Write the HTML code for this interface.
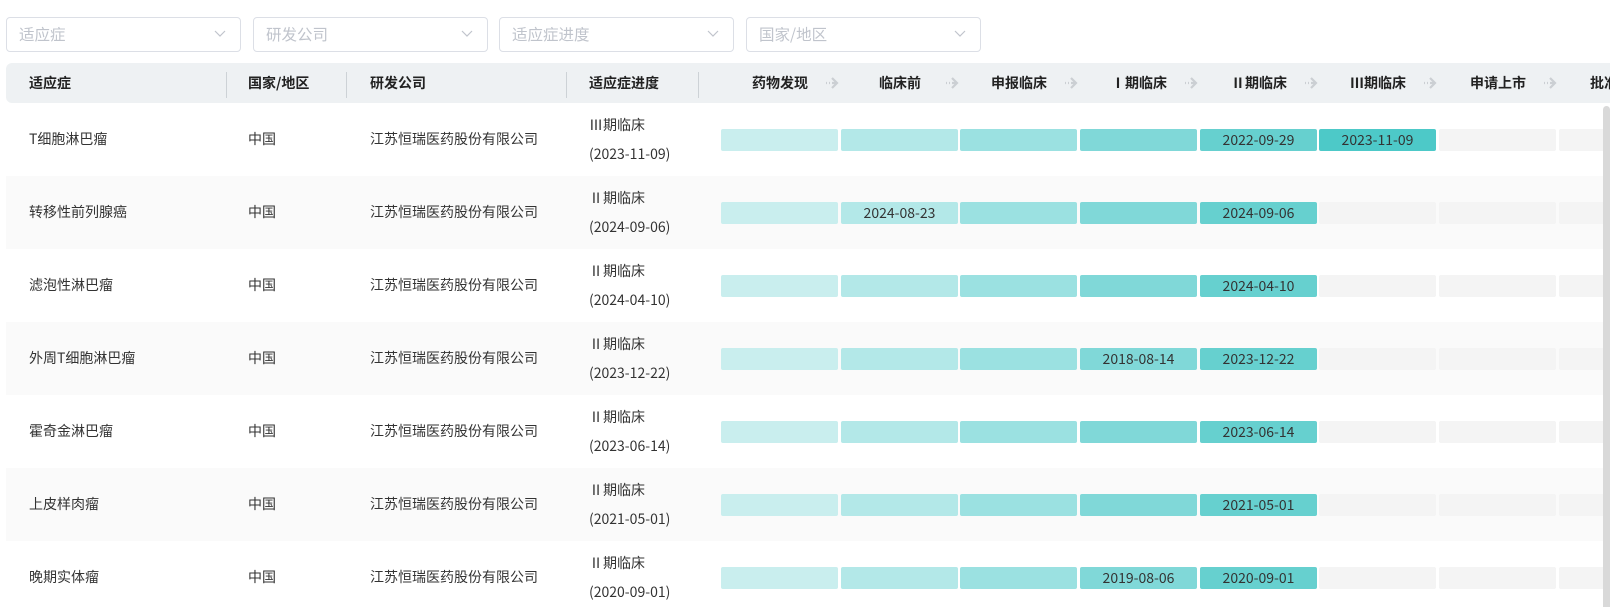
<!DOCTYPE html>
<html><head><meta charset="utf-8">
<style>
*{margin:0;padding:0;box-sizing:border-box}
html,body{width:1610px;height:607px;overflow:hidden;background:#fff}
#w{position:relative;width:1610px;height:607px;overflow:hidden;font-family:"Noto Sans CJK SC","Liberation Sans",sans-serif;font-size:14px;color:#333}
.dd{position:absolute;top:17px;height:35px;width:235px;border:1px solid #dcdfe6;border-radius:4px;color:#c0c4cc;font-size:15.5px;line-height:33px;padding-left:12px}
.dd svg{position:absolute;right:14px;top:12px}
.hdr{position:absolute;left:6px;top:63px;width:1604px;height:40px;background:#eef1f3;border-radius:6px 0 0 6px}
.t{position:absolute;line-height:40px;font-weight:bold;color:#222;white-space:nowrap}
.st{position:absolute;top:63px;line-height:40px;font-weight:bold;color:#222;width:120px;text-align:center;white-space:nowrap}
.sep{position:absolute;top:9px;width:1px;height:26px;background:#cdd2d6}
.row{position:absolute;left:6px;width:1604px;height:73px}
.c{position:absolute;top:0;line-height:73px;white-space:nowrap}
.p{position:absolute;top:8px;line-height:29px;white-space:nowrap}
.b{position:absolute;height:22px;width:117px;border-radius:2px;text-align:center;line-height:22px;color:#333;font-size:14px;background:#f4f4f4}
.a{position:absolute;top:77px}
.c1{background:#c9eeee}.c2{background:#b3e8e8}.c3{background:#9be1e1}.c4{background:#80d8d8}.c5{background:#66d0cf}.c6{background:#4dc9c8}
.x1{left:721px}.x2{left:841px}.x3{left:960px}.x4{left:1080px}.x5{left:1200px}.x6{left:1319px}.x7{left:1439px}.x8{left:1559px}
.sb{position:absolute;left:1603px;top:106px;width:7px;height:510px;background:#d9d9d9;border-radius:4px}
</style></head><body><div id="w">
<div class="dd" style="left:6px">适应症<svg width="12" height="8" viewBox="0 0 12 8"><path d="M1 1l5 5 5-5" fill="none" stroke="#c0c4cc" stroke-width="1.2"/></svg></div>
<div class="dd" style="left:253px">研发公司<svg width="12" height="8" viewBox="0 0 12 8"><path d="M1 1l5 5 5-5" fill="none" stroke="#c0c4cc" stroke-width="1.2"/></svg></div>
<div class="dd" style="left:499px">适应症进度<svg width="12" height="8" viewBox="0 0 12 8"><path d="M1 1l5 5 5-5" fill="none" stroke="#c0c4cc" stroke-width="1.2"/></svg></div>
<div class="dd" style="left:746px">国家/地区<svg width="12" height="8" viewBox="0 0 12 8"><path d="M1 1l5 5 5-5" fill="none" stroke="#c0c4cc" stroke-width="1.2"/></svg></div>

<div class="hdr">
<span class="t" style="left:23px">适应症</span>
<div class="sep" style="left:220px"></div>
<span class="t" style="left:242px">国家/地区</span>
<div class="sep" style="left:340px"></div>
<span class="t" style="left:364px">研发公司</span>
<div class="sep" style="left:560px"></div>
<span class="t" style="left:583px">适应症进度</span>
<div class="sep" style="left:692px"></div>
</div>

<span class="st" style="left:720px">药物发现</span>
<span class="st" style="left:840px">临床前</span>
<span class="st" style="left:959px">申报临床</span>
<span class="st" style="left:1079px">Ⅰ期临床</span>
<span class="st" style="left:1199px">Ⅱ期临床</span>
<span class="st" style="left:1318px">Ⅲ期临床</span>
<span class="st" style="left:1438px">申请上市</span>
<span class="st" style="left:1558px">批准上市</span>

<svg class="a" style="left:825px" width="14" height="12" viewBox="0 0 14 12"><path d="M1 6h1M4 6h1M7 6h4M7 1l5 5-5 5" fill="none" stroke="#cbcfd3" stroke-width="2.2"/></svg>
<svg class="a" style="left:945px" width="14" height="12" viewBox="0 0 14 12"><path d="M1 6h1M4 6h1M7 6h4M7 1l5 5-5 5" fill="none" stroke="#cbcfd3" stroke-width="2.2"/></svg>
<svg class="a" style="left:1064px" width="14" height="12" viewBox="0 0 14 12"><path d="M1 6h1M4 6h1M7 6h4M7 1l5 5-5 5" fill="none" stroke="#cbcfd3" stroke-width="2.2"/></svg>
<svg class="a" style="left:1184px" width="14" height="12" viewBox="0 0 14 12"><path d="M1 6h1M4 6h1M7 6h4M7 1l5 5-5 5" fill="none" stroke="#cbcfd3" stroke-width="2.2"/></svg>
<svg class="a" style="left:1304px" width="14" height="12" viewBox="0 0 14 12"><path d="M1 6h1M4 6h1M7 6h4M7 1l5 5-5 5" fill="none" stroke="#cbcfd3" stroke-width="2.2"/></svg>
<svg class="a" style="left:1423px" width="14" height="12" viewBox="0 0 14 12"><path d="M1 6h1M4 6h1M7 6h4M7 1l5 5-5 5" fill="none" stroke="#cbcfd3" stroke-width="2.2"/></svg>
<svg class="a" style="left:1543px" width="14" height="12" viewBox="0 0 14 12"><path d="M1 6h1M4 6h1M7 6h4M7 1l5 5-5 5" fill="none" stroke="#cbcfd3" stroke-width="2.2"/></svg>

<div class="row" style="top:103px;background:#fff"><span class="c" style="left:23px">T细胞淋巴瘤</span><span class="c" style="left:242px">中国</span><span class="c" style="left:364px">江苏恒瑞医药股份有限公司</span><span class="p" style="left:583px">Ⅲ期临床<br>(2023-11-09)</span></div>
<div class="b c1 x1" style="top:129px"></div><div class="b c2 x2" style="top:129px"></div><div class="b c3 x3" style="top:129px"></div><div class="b c4 x4" style="top:129px"></div><div class="b c5 x5" style="top:129px">2022-09-29</div><div class="b c6 x6" style="top:129px">2023-11-09</div><div class="b x7" style="top:129px"></div><div class="b x8" style="top:129px"></div>

<div class="row" style="top:176px;background:#fafafa"><span class="c" style="left:23px">转移性前列腺癌</span><span class="c" style="left:242px">中国</span><span class="c" style="left:364px">江苏恒瑞医药股份有限公司</span><span class="p" style="left:583px">Ⅱ期临床<br>(2024-09-06)</span></div>
<div class="b c1 x1" style="top:202px"></div><div class="b c2 x2" style="top:202px">2024-08-23</div><div class="b c3 x3" style="top:202px"></div><div class="b c4 x4" style="top:202px"></div><div class="b c5 x5" style="top:202px">2024-09-06</div><div class="b x6" style="top:202px"></div><div class="b x7" style="top:202px"></div><div class="b x8" style="top:202px"></div>

<div class="row" style="top:249px;background:#fff"><span class="c" style="left:23px">滤泡性淋巴瘤</span><span class="c" style="left:242px">中国</span><span class="c" style="left:364px">江苏恒瑞医药股份有限公司</span><span class="p" style="left:583px">Ⅱ期临床<br>(2024-04-10)</span></div>
<div class="b c1 x1" style="top:275px"></div><div class="b c2 x2" style="top:275px"></div><div class="b c3 x3" style="top:275px"></div><div class="b c4 x4" style="top:275px"></div><div class="b c5 x5" style="top:275px">2024-04-10</div><div class="b x6" style="top:275px"></div><div class="b x7" style="top:275px"></div><div class="b x8" style="top:275px"></div>

<div class="row" style="top:322px;background:#fafafa"><span class="c" style="left:23px">外周T细胞淋巴瘤</span><span class="c" style="left:242px">中国</span><span class="c" style="left:364px">江苏恒瑞医药股份有限公司</span><span class="p" style="left:583px">Ⅱ期临床<br>(2023-12-22)</span></div>
<div class="b c1 x1" style="top:348px"></div><div class="b c2 x2" style="top:348px"></div><div class="b c3 x3" style="top:348px"></div><div class="b c4 x4" style="top:348px">2018-08-14</div><div class="b c5 x5" style="top:348px">2023-12-22</div><div class="b x6" style="top:348px"></div><div class="b x7" style="top:348px"></div><div class="b x8" style="top:348px"></div>

<div class="row" style="top:395px;background:#fff"><span class="c" style="left:23px">霍奇金淋巴瘤</span><span class="c" style="left:242px">中国</span><span class="c" style="left:364px">江苏恒瑞医药股份有限公司</span><span class="p" style="left:583px">Ⅱ期临床<br>(2023-06-14)</span></div>
<div class="b c1 x1" style="top:421px"></div><div class="b c2 x2" style="top:421px"></div><div class="b c3 x3" style="top:421px"></div><div class="b c4 x4" style="top:421px"></div><div class="b c5 x5" style="top:421px">2023-06-14</div><div class="b x6" style="top:421px"></div><div class="b x7" style="top:421px"></div><div class="b x8" style="top:421px"></div>

<div class="row" style="top:468px;background:#fafafa"><span class="c" style="left:23px">上皮样肉瘤</span><span class="c" style="left:242px">中国</span><span class="c" style="left:364px">江苏恒瑞医药股份有限公司</span><span class="p" style="left:583px">Ⅱ期临床<br>(2021-05-01)</span></div>
<div class="b c1 x1" style="top:494px"></div><div class="b c2 x2" style="top:494px"></div><div class="b c3 x3" style="top:494px"></div><div class="b c4 x4" style="top:494px"></div><div class="b c5 x5" style="top:494px">2021-05-01</div><div class="b x6" style="top:494px"></div><div class="b x7" style="top:494px"></div><div class="b x8" style="top:494px"></div>

<div class="row" style="top:541px;background:#fff"><span class="c" style="left:23px">晚期实体瘤</span><span class="c" style="left:242px">中国</span><span class="c" style="left:364px">江苏恒瑞医药股份有限公司</span><span class="p" style="left:583px">Ⅱ期临床<br>(2020-09-01)</span></div>
<div class="b c1 x1" style="top:567px"></div><div class="b c2 x2" style="top:567px"></div><div class="b c3 x3" style="top:567px"></div><div class="b c4 x4" style="top:567px">2019-08-06</div><div class="b c5 x5" style="top:567px">2020-09-01</div><div class="b x6" style="top:567px"></div><div class="b x7" style="top:567px"></div><div class="b x8" style="top:567px"></div>

<div class="sb"></div>
</div></body></html>
